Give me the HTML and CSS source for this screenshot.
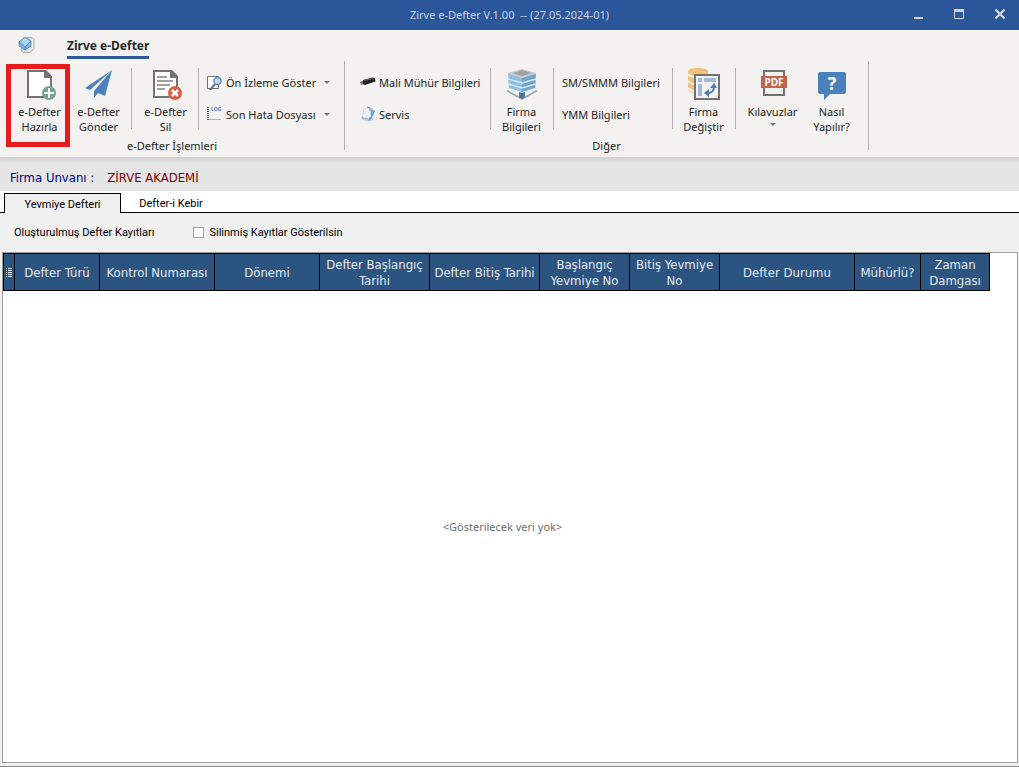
FILE: index.html
```html
<!DOCTYPE html>
<html lang="tr">
<head>
<meta charset="utf-8">
<title>Zirve e-Defter V.1.00</title>
<link rel="stylesheet" href="styles.css">
</head>
<body>
<header class="titlebar">
  <h1 class="title">Zirve e-Defter V.1.00&nbsp; -- (27.05.2024-01)</h1>
  <div class="window-buttons">
    <button class="win-btn" aria-label="Simge durumuna küçült"><svg width="12" height="12" viewBox="0 0 12 12"><path d="M2 9h9v2H2z" fill="#d2d2d2"/></svg></button>
    <button class="win-btn" aria-label="Ekranı kapla"><svg width="12" height="12" viewBox="0 0 12 12"><path d="M1.500 2.500h9v8h-9z" fill="none" stroke="#d2d2d2"/><path d="M1 1h10v3H1z" fill="#d2d2d2"/></svg></button>
    <button class="win-btn" aria-label="Kapat"><svg width="12" height="12" viewBox="0 0 12 12"><path d="M1.500 1.500l9 9M10.500 1.500l-9 9" stroke="#d8d8d8" stroke-width="2.200"/></svg></button>
  </div>
</header>

<nav class="ribbon-tabs">
  <svg class="app-icon" width="18" height="18" viewBox="0 0 18 18">
    <path d="M9 1.500h5l2 2v9l-4 4H5l-2-3z" fill="#e0e2e4" stroke="#a9acaf"/>
    <path d="M14 4v8l-3 3" fill="none" stroke="#fff"/>
    <path d="M1 6L7 1l6 4-6 6z" fill="#a3caef" stroke="#5b95cb"/>
    <path d="M1 6v4l6 4v-3zM7 11l6-6v5l-6 4z" fill="#7fb2e2" stroke="#5588b8" stroke-width=".8"/>
    <path d="M4 6l4-3M6 8l4-3" stroke="#e7f4ff"/>
  </svg>
  <a class="ribbon-tab" href="#">Zirve e-Defter</a>
</nav>

<div class="ribbon">
  <section class="group">
    <div class="group-items">
      <div class="cell cell-pair divided">
        <button class="big highlighted">
          <svg width="32" height="32" viewBox="0 0 32 32"><path d="M4 3h17v6h6v20H4z" fill="#fff" stroke="#727272" stroke-width="2"/><path d="M20 2h2l6 6v2h-8z" fill="#727272"/><circle cx="25" cy="25" r="7" fill="#6fa58c"/><path d="M25 20v10M20 25h10" stroke="#fff" stroke-width="2"/></svg>
          <span>e-Defter<br>Hazırla</span>
        </button>
        <button class="big">
          <svg width="32" height="32" viewBox="0 0 32 32"><path d="M2 20L29 2 7 22zM29 2l-7 26-7-3-4 5v-7z" fill="#4c82bb"/></svg>
          <span>e-Defter<br>Gönder</span>
        </button>
      </div>
      <div class="cell cell-delete divided">
        <button class="big">
          <svg width="32" height="32" viewBox="0 0 32 32"><path d="M4 3h17v6h6v20H4z" fill="#fff" stroke="#727272" stroke-width="2"/><path d="M20 2h2l6 6v2h-8z" fill="#727272"/><path d="M7 9h10M7 13h16M7 17h13M7 21h8" stroke="#a0a0a0" stroke-width="2"/><circle cx="25" cy="25" r="7" fill="#d6603f"/><path d="M22 22l6 6M28 22l-6 6" stroke="#fff" stroke-width="2.500"/></svg>
          <span>e-Defter<br>Sil</span>
        </button>
      </div>
      <div class="cell cell-list">
        <button class="small">
          <svg width="16" height="16" viewBox="0 0 16 16"><path d="M.5 2.500h11v12H.5z" fill="#fff" stroke="#6e6e6e"/><path d="M8 10l-5 6" stroke="#6e6e6e" stroke-width="2"/><circle cx="10.500" cy="7" r="3.600" fill="#c5daed" stroke="#5c90c4" stroke-width="1.500"/></svg>
          <span>Ön İzleme Göster</span><i class="arrow"></i>
        </button>
        <button class="small">
          <svg width="16" height="16" viewBox="0 0 16 16"><path d="M1 1v14" stroke="#6b6b6b" stroke-width="2" stroke-dasharray="1 1"/><path d="M2 13.500h12" stroke="#b0b0b0"/><text x="4" y="5" class="log-text">LOG</text></svg>
          <span>Son Hata Dosyası</span><i class="arrow"></i>
        </button>
      </div>
    </div>
    <div class="caption">e-Defter İşlemleri</div>
  </section>

  <section class="group">
    <div class="group-items">
      <div class="cell cell-list cell-seal divided">
        <button class="small">
          <svg width="16" height="16" viewBox="0 0 16 16"><path d="M0 8l4-2 1 4-4 1z" fill="#777"/><path d="M3 6l10-2.500 2 1 .5 3L5 11l-2-1z" fill="#242424"/><path d="M4 6.500l9-2" stroke="#666"/></svg>
          <span>Mali Mühür Bilgileri</span>
        </button>
        <button class="small">
          <svg width="16" height="16" viewBox="0 0 16 16"><path d="M4 3l6-2 3 3v10l-6 1-5-2z" fill="#dce6f0" stroke="#b9c6d2" stroke-width=".7"/><path d="M11 3l4 2-4 9-3 1 2-6z" fill="#6f9fdb"/><path d="M4 3l6 0 1 8-8 1z" fill="#edf1f5"/><path d="M1 11l7 1 0 2-6-1z" fill="#a7bfd8"/><path d="M7 1l3 1v3" fill="none" stroke="#7890a8"/></svg>
          <span>Servis</span>
        </button>
      </div>
      <div class="cell cell-firm divided">
        <button class="big">
          <svg width="32" height="32" viewBox="0 0 32 32"><path d="M0 23l16-5 16 5-16 9z" fill="#a2a2a2"/><path d="M2 5l14 5v20L3 23z" fill="#8ebfe0"/><path d="M30 5l-14 5v20l13-7z" fill="#6fa3ca"/><path d="M2 11l14 4 14-4M2.500 16l13.500 4 13.500-4" fill="none" stroke="#d9e8f2" stroke-width="1.500"/><path d="M3 20l13 4 13-4v3l-13 7-13-7z" fill="#eef1f3"/><path d="M13 24l3 1 3-1v5l-3 2-3-2z" fill="#4c7899"/><path d="M2 5l14-4 14 4v1l-14 4L2 6z" fill="#c6c8c9"/><path d="M7 5l9-3 9 3-9 3z" fill="#9da1a3"/></svg>
          <span>Firma<br>Bilgileri</span>
        </button>
      </div>
      <div class="cell cell-list cell-info divided">
        <button class="small"><span>SM/SMMM Bilgileri</span></button>
        <button class="small"><span>YMM Bilgileri</span></button>
      </div>
      <div class="cell cell-firm divided">
        <button class="big">
          <svg width="32" height="32" viewBox="0 0 32 32"><path d="M0 3c0-4 20-4 20 0v21c-5 2-20 2-20-3z" fill="#ebc17b"/><path d="M0 6c3 4 15 4 20 1M0 13c3 4 15 4 20 1M0 20c3 4 15 4 20 1" fill="none" stroke="#f2f1ef" stroke-width="2"/><path d="M7 7h24v24H7z" fill="#f3f2f1" stroke="#727272" stroke-width="2"/><path d="M10 10h4v4h-4zM16 10h12v4H16zM10 16h4v12h-4z" fill="#9fb9d8"/><path d="M20 25c4 0 6-3 6-6" fill="none" stroke="#477eb7" stroke-width="2"/><path d="M22 20l4-5 3 5zM21 21v8l-5-4z" fill="#477eb7"/></svg>
          <span>Firma<br>Değiştir</span>
        </button>
      </div>
      <div class="cell cell-help">
        <button class="big">
          <svg width="32" height="32" viewBox="0 0 32 32"><path d="M7 3h20v24H7z" fill="#f3f2f1" stroke="#727272" stroke-width="2"/><rect x="4" y="8" width="26" height="12" fill="#c4634a"/><text x="17" y="18" class="pdf-text">PDF</text></svg>
          <span>Kılavuzlar</span><i class="arrow"></i>
        </button>
        <button class="big">
          <svg width="32" height="32" viewBox="0 0 32 32"><path d="M4 4h24q2 0 2 2v18q0 2-2 2H14l-6 6v-6H4q-2 0-2-2V6q0-2 2-2z" fill="#4c82bb"/><text x="16" y="22" class="help-text">?</text></svg>
          <span>Nasıl<br>Yapılır?</span>
        </button>
      </div>
    </div>
    <div class="caption">Diğer</div>
  </section>
</div>

<div class="company"><span>Firma Unvanı :</span><span class="company-name">ZİRVE AKADEMİ</span></div>

<div class="tabs" role="tablist">
  <button class="tab active" role="tab" aria-selected="true">Yevmiye Defteri</button>
  <button class="tab" role="tab" aria-selected="false">Defter-i Kebir</button>
</div>

<main class="panel">
  <div class="filters">
    <span>Oluşturulmuş Defter Kayıtları</span>
    <label class="check"><input type="checkbox">Silinmiş Kayıtlar Gösterilsin</label>
  </div>
  <div class="grid-box">
    <table class="records">
      <colgroup><col class="w-menu"><col class="w-type"><col class="w-control"><col class="w-period"><col class="w-date"><col class="w-date"><col class="w-number"><col class="w-number"><col class="w-state"><col class="w-sealed"><col class="w-stamp"></colgroup>
      <thead><tr>
        <th><svg width="6" height="10" viewBox="0 0 6 10"><path d="M0 .5h1M2 .5h4M0 2.500h1M2 2.500h4M0 4.500h1M2 4.500h4M0 6.500h1M2 6.500h4M0 8.500h1M2 8.500h4" stroke="#e4ebf2"/></svg></th>
        <th>Defter Türü</th><th>Kontrol Numarası</th><th>Dönemi</th><th>Defter Başlangıç<br>Tarihi</th><th>Defter Bitiş Tarihi</th><th>Başlangıç<br>Yevmiye No</th><th>Bitiş Yevmiye<br>No</th><th>Defter Durumu</th><th>Mühürlü?</th><th>Zaman<br>Damgası</th>
      </tr></thead>
    </table>
    <p class="empty">&lt;Gösterilecek veri yok&gt;</p>
  </div>
</main>
</body>
</html>
```

FILE: styles.css
```css
* { box-sizing: border-box; }
body {
  margin: 0;
  min-height: 100vh;
  display: flex;
  flex-direction: column;
  background: #f0f0f0;
  color: #262626;
  font: 12px/15px "Noto Sans", "Open Sans", sans-serif;
}
button {
  border: 0;
  padding: 0;
  background: none;
  color: inherit;
  font: inherit;
}
svg { display: block; flex: none; }

.titlebar {
  display: grid;
  grid-template-columns: 1fr auto;
  align-items: center;
  height: 30px;
  padding-bottom: 2px;
  background: #2b579a;
}
.title {
  grid-area: 1 / 1 / 2 / 3;
  margin: 0;
  text-align: center;
  font-size: 11px;
  font-weight: 400;
  color: #c9d3e3;
}
.window-buttons {
  grid-area: 1 / 2;
  display: flex;
  gap: 29px;
  padding-right: 13px;
}

.ribbon-tabs {
  display: flex;
  align-items: flex-start;
  height: 31px;
  padding: 6px 18px 0;
  gap: 31px;
  background: #f3f2f1;
}
.ribbon-tab {
  padding: 2px 0;
  border-bottom: 3px solid #2b579a;
  color: #262626;
  font-weight: 700;
  line-height: 16px;
  text-decoration: none;
}

.ribbon {
  display: flex;
  height: 97px;
  padding-bottom: 7px;
  background: #f3f2f1;
  border-bottom: 1px solid #d0d0d0;
  font-size: 11px;
}
.group {
  display: flex;
  flex-direction: column;
  border-right: 1px solid #b4b2b0;
}
.group-items { display: flex; flex: 1; padding-top: 7px; }
.caption { height: 10px; line-height: 12px; text-align: center; }
.cell { display: flex; height: 61px; }
.divided { border-right: 1px solid #b4b2b0; }
.cell-pair { padding: 0 3px 0 10px; }
.cell-delete { padding: 0 3px 0 4px; }
.cell-firm { padding: 0 2px 0 1px; }
.cell-help { padding: 0 7px; }
.cell-list { flex-direction: column; gap: 8px; padding: 2px 0 0 8px; width: 145px; }
.cell-seal { padding-left: 15px; width: 146px; }
.cell-info { width: 119px; }
.big {
  position: relative;
  display: flex;
  flex-direction: column;
  align-items: center;
  width: 59px;
  gap: 4px;
}
.highlighted::after {
  content: "";
  position: absolute;
  inset: -4px -1px -18px -4px;
  border: 5px solid #e81b1c;
}
.small {
  display: flex;
  align-items: center;
  gap: 3px;
  height: 24px;
  white-space: nowrap;
}
.arrow {
  border: 3px solid transparent;
  border-top-color: #777;
  border-bottom: 0;
}
.small .arrow { margin-left: 5px; }
.log-text { font: 700 5px "Open Sans", sans-serif; fill: #4c82bb; }
.pdf-text { font: 700 10px "Open Sans", sans-serif; fill: #fff; text-anchor: middle; }
.help-text { font: 700 18px "Open Sans", sans-serif; fill: #fff; text-anchor: middle; }

.company {
  display: flex;
  align-items: center;
  gap: 13px;
  height: 33px;
  padding: 6px 10px 0;
  background: linear-gradient(#d4d4d4, #e5e5e5 5px);
  color: #000080;
  font: 13px/16px "DejaVu Sans Condensed", "Noto Sans", sans-serif;
}
.company-name { color: #800000; }

.tabs {
  display: flex;
  align-items: flex-end;
  height: 22px;
  padding-left: 4px;
  background: linear-gradient(#000, #000) bottom / 100% 1px no-repeat #fff;
}
.tab {
  width: 100px;
  height: 20px;
  padding-top: 2px;
  color: #000;
  font: 11px/14px Roboto, "Noto Sans", sans-serif;
}
.tab.active {
  width: 117px;
  background: #f0f0f0;
  border: 1px solid #000;
  border-bottom: 0;
}

.panel {
  display: flex;
  flex: 1;
  flex-direction: column;
  padding: 0 1px 3px 2px;
  border-bottom: 1px solid #888;
}
.filters {
  display: flex;
  align-items: center;
  gap: 39px;
  height: 39px;
  padding-left: 12px;
  color: #000;
  font: 11px/14px Roboto, "Noto Sans", sans-serif;
}
.check { display: flex; align-items: center; gap: 5px; }
.check input {
  appearance: none;
  width: 11px;
  height: 11px;
  margin: 0;
  border: 1px solid #a0a0a0;
  background: #fff;
}
.grid-box {
  position: relative;
  flex: 1;
  border: 1px solid #a0a0a0;
  background: #fff;
}
.records {
  table-layout: fixed;
  width: 987px;
  border-collapse: separate;
  border-spacing: 0;
  background: #2c5480;
  color: #e4ebf2;
}
.records th {
  height: 38px;
  padding: 2px 0 0;
  border: 1px solid #000;
  border-left: 0;
  font: 13px/16px "DejaVu Sans Condensed", "Noto Sans", sans-serif;
  white-space: nowrap;
}
.records th:first-child { border-left: 1px solid #000; }
.records th svg { margin: 0 auto; }
.w-menu { width: 12px; }
.w-type { width: 85px; }
.w-control { width: 115px; }
.w-period { width: 105px; }
.w-date { width: 110px; }
.w-number { width: 90px; }
.w-state { width: 135px; }
.w-sealed { width: 66px; }
.w-stamp { width: 69px; }
.empty {
  position: absolute;
  inset: 37px 15px 0 0;
  display: grid;
  place-items: center;
  margin: 0;
  color: #707070;
  font-size: 11px;
}
```
